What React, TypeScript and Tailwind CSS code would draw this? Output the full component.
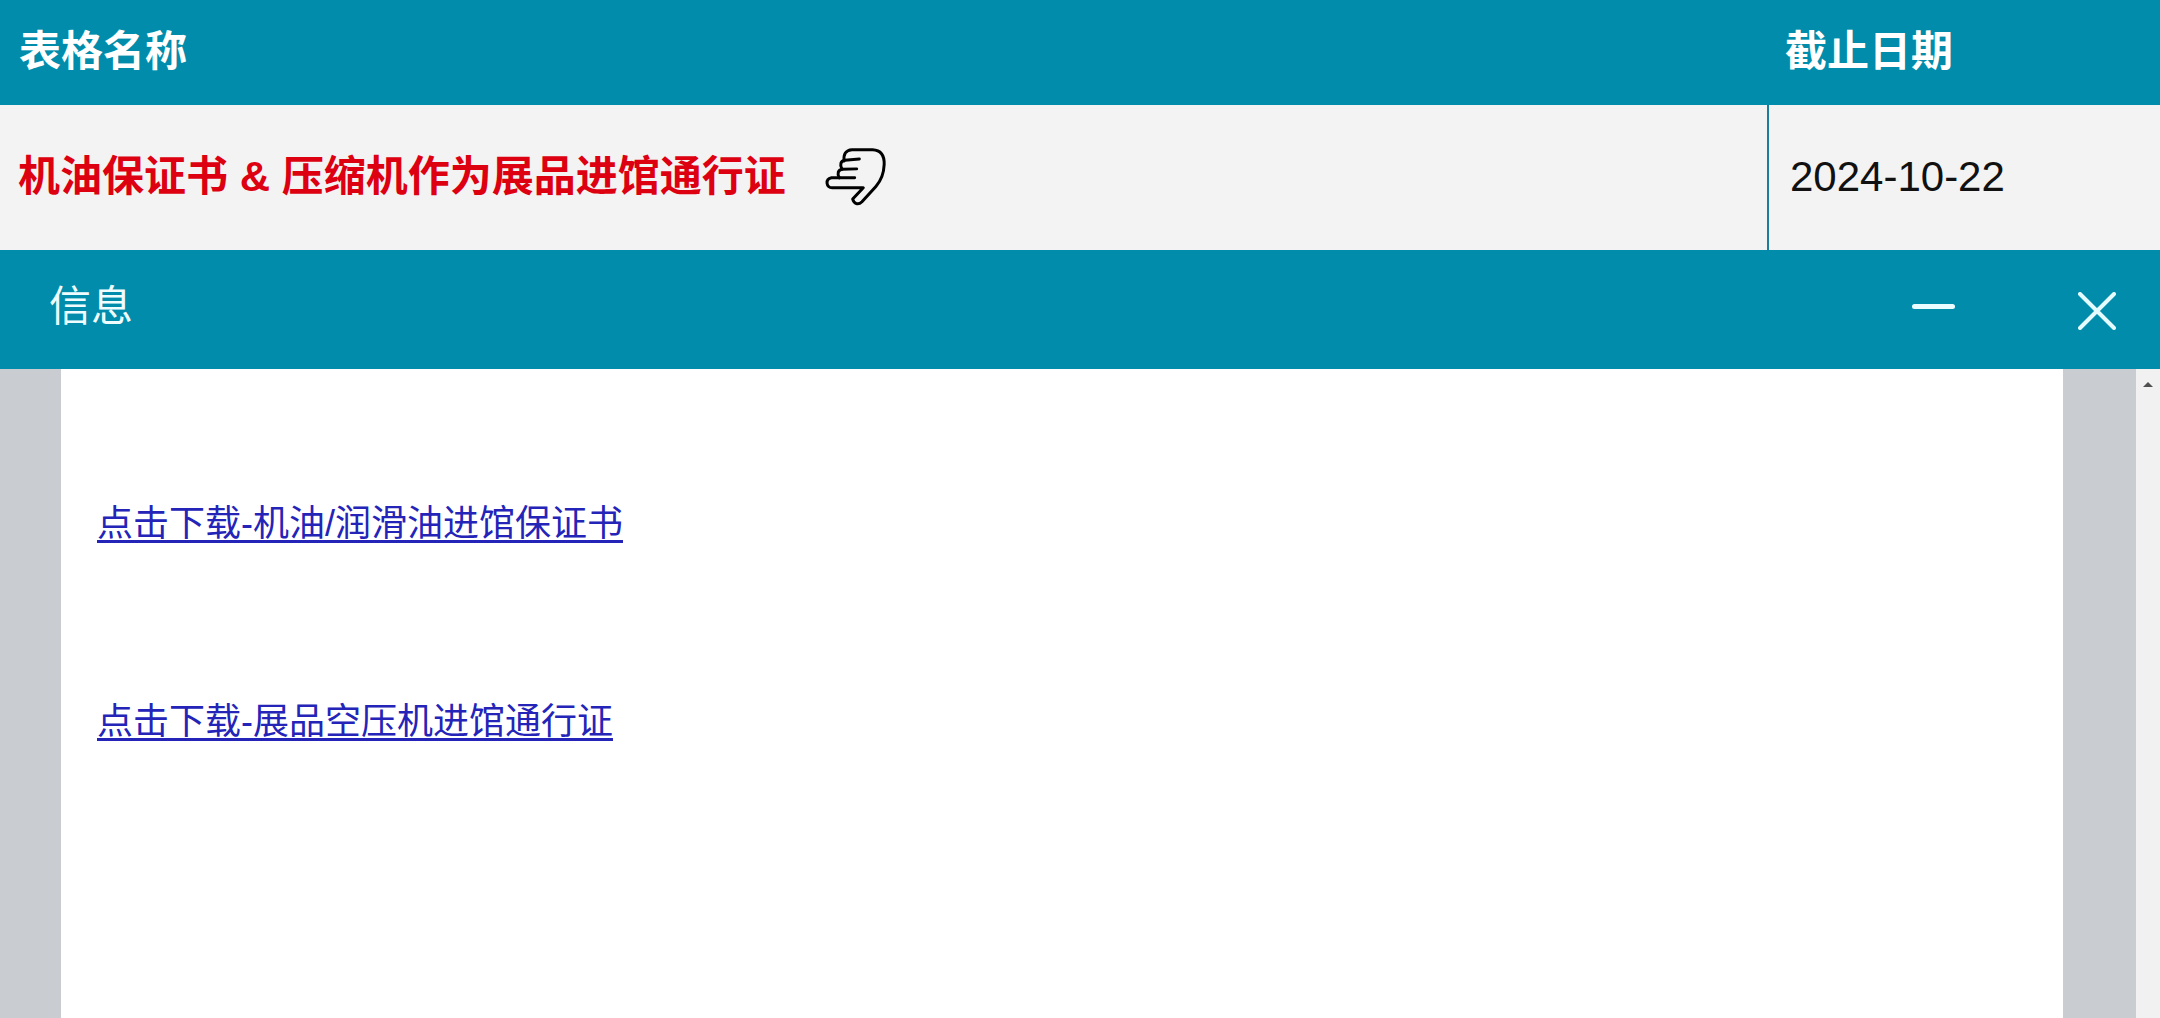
const font = "font-['Liberation_Sans','Noto_Sans_CJK_SC',sans-serif]";

function HandIcon() {
  return (
    <svg
      viewBox="125 52 195 184"
      className="h-[61px] w-[65px] shrink-0"
      fill="none"
      stroke="#000"
      strokeWidth="9"
      strokeLinecap="round"
      strokeLinejoin="round"
    >
      <path d="M188 97 C186 78 192 64 212 63 L274 63 C298 64 310 80 309 108 C308 134 300 156 284 174 L242 220 C230 232 218 226 214 212 L246 178 L152 178 C134 178 130 152 150 148 L220 148" />
      <path d="M174 148 C166 136 170 124 182 122 L226 121" />
      <path d="M182 122 C174 108 178 97 190 95 L234 91" />
    </svg>
  );
}

function Minimize() {
  return <div className="h-[5px] w-[43px] rounded-full bg-[#eafcff]" />;
}

function Close() {
  return (
    <svg viewBox="0 0 38 38" className="h-[38px] w-[38px]" stroke="#e4fbff" strokeWidth="4" strokeLinecap="round">
      <path d="M2 2 L36 36 M36 2 L2 36" />
    </svg>
  );
}

export default function App() {
  return (
    <div className={`h-[1018px] w-[2160px] overflow-hidden flex flex-col bg-white ${font}`}>
      <div className="grid h-[105px] grid-cols-[1769px_1fr] items-center bg-[#008caa] pb-[2px] text-[42px] font-bold text-white">
        <div className="pl-[19px]">表格名称</div>
        <div className="pl-[16px]">截止日期</div>
      </div>

      <div className="grid h-[145px] grid-cols-[1769px_1fr] bg-[#f3f3f3]">
        <div className="flex items-center border-r-2 border-[#1a7d9b] pl-[18px] pb-[2px]">
          <span className="text-[42px] font-bold text-[#dd0011]">机油保证书 &amp; 压缩机作为展品进馆通行证</span>
          <div className="ml-[37px]">
            <HandIcon />
          </div>
        </div>
        <div className="flex items-center pl-[21px] pb-[2px] text-[42px] text-[#111]">2024-10-22</div>
      </div>

      <div className="flex h-[119px] items-center justify-between bg-[#008caa] pb-[6px]">
        <div className="pl-[49px] text-[42px] text-[#effdff]">信息</div>
        <div className="flex items-center">
          <Minimize />
          <div className="ml-[123px] mr-[44px] pt-[8px]">
            <Close />
          </div>
        </div>
      </div>

      <div className="flex flex-1">
        <div className="w-[61px] bg-[#c9ccd0]" />
        <div className="flex-1 bg-white pl-[36px] pt-[132px] text-[36px] leading-[46px] text-[#2424b8]">
          <p>
            <a href="#" className="underline underline-offset-[4px]">点击下载-机油/润滑油进馆保证书</a>
          </p>
          <p className="mt-[152px]">
            <a href="#" className="underline underline-offset-[4px]">点击下载-展品空压机进馆通行证</a>
          </p>
        </div>
        <div className="w-[73px] bg-[#c9ccd0]" />
        <div className="flex w-[24px] justify-center bg-[#f1f1f1] pt-[13px]">
          <div className="h-0 w-0 border-x-[5px] border-b-[5px] border-x-transparent border-b-[#505050]" />
        </div>
      </div>
    </div>
  );
}
